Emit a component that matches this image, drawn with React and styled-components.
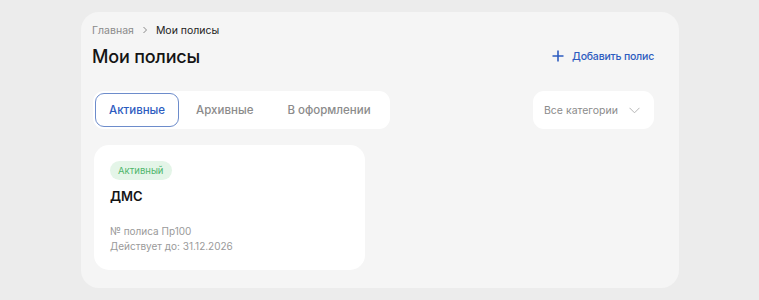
import styled, { createGlobalStyle } from "styled-components"

const Global = createGlobalStyle`
  html, body { margin: 0; padding: 0; background: #ececec; }
  body { font-family: Inter, "Noto Sans", sans-serif; }
`

const Screen = styled.div`
  width: 759px;
  height: 300px;
  box-sizing: border-box;
  padding: 12px 80px 12px 81px;
  display: flex;
`

const Panel = styled.div`
  flex: 1;
  background: #f5f5f5;
  border-radius: 18px;
  padding: 11px 25px 0 11px;
  display: flex;
  flex-direction: column;
`

const Crumbs = styled.div`
  display: flex;
  align-items: center;
  gap: 7px;
  font-size: 10.5px;
  height: 14px;
  color: #222;
`

const CrumbLink = styled.span`
  color: #8a8a8a;
`

const HeadRow = styled.div`
  display: flex;
  justify-content: space-between;
  align-items: center;
  margin-top: 7px;
  height: 24px;
`

const Title = styled.h1`
  margin: 0;
  font-size: 18px;
  font-weight: 500;
  color: #141414;
  letter-spacing: -0.2px;
`

const AddBtn = styled.button`
  border: none;
  background: none;
  padding: 0;
  display: flex;
  align-items: center;
  gap: 8px;
  color: #2d5cc0;
  font: 500 10.5px Inter, "Noto Sans", sans-serif;
  letter-spacing: -0.2px;
`

const Controls = styled.div`
  display: flex;
  justify-content: space-between;
  margin-top: 23px;
`

const Tabs = styled.div`
  display: flex;
  align-items: center;
  background: #fff;
  border-radius: 11px;
  padding: 2px;
  height: 38px;
  box-sizing: border-box;
  margin-left: 1px;
`

const Tab = styled.div`
  height: 34px;
  box-sizing: border-box;
  display: flex;
  align-items: center;
  padding: 0 ${p => (p.$active ? "13px" : "16px")};
  border-radius: 9px;
  border: 1px solid ${p => (p.$active ? "#6d8ccb" : "transparent")};
  color: ${p => (p.$active ? "#2d5cc0" : "#8b8b8b")};
  font-size: 11.5px;
  font-weight: 500;
`

const Select = styled.div`
  width: 121px;
  height: 38px;
  box-sizing: border-box;
  background: #fff;
  border-radius: 11px;
  display: flex;
  align-items: center;
  justify-content: space-between;
  padding: 0 14px 0 11px;
  font-size: 10.5px;
  color: #8b8b8b;
`

const Card = styled.div`
  width: 271px;
  height: 125px;
  box-sizing: border-box;
  margin-top: 16px;
  margin-left: 2px;
  background: #fff;
  border-radius: 15px;
  padding: 16px 16px;
  display: flex;
  flex-direction: column;
  align-items: flex-start;
`

const Badge = styled.span`
  background: #e4f5e8;
  color: #4fb56b;
  font-size: 9.5px;
  font-weight: 400;
  border-radius: 10px;
  padding: 4px 8px;
  line-height: 11px;
`

const CardTitle = styled.div`
  margin-top: 8px;
  font-size: 13px;
  font-weight: 600;
  color: #141414;
`

const Meta = styled.div`
  margin-top: ${p => p.$gap || 0}px;
  font-size: 10px;
  color: #9a9a9a;
  line-height: 15px;
`

export default function App() {
  return (
    <Screen>
      <Global />
      <Panel>
        <Crumbs>
          <CrumbLink>Главная</CrumbLink>
          <svg width="8" height="8" viewBox="0 0 8 8" fill="none">
            <path d="M2.5 1l3 3-3 3" stroke="#8a8a8a" strokeWidth="1" />
          </svg>
          <span>Мои полисы</span>
        </Crumbs>
        <HeadRow>
          <Title>Мои полисы</Title>
          <AddBtn>
            <svg width="12" height="12" viewBox="0 0 12 12" fill="none">
              <path d="M6 0.5v11M0.5 6h11" stroke="#2d5cc0" strokeWidth="1.6" />
            </svg>
            Добавить полис
          </AddBtn>
        </HeadRow>
        <Controls>
          <Tabs>
            <Tab $active>Активные</Tab>
            <Tab>Архивные</Tab>
            <Tab>В оформлении</Tab>
          </Tabs>
          <Select>
            Все категории
            <svg width="11" height="7" viewBox="0 0 11 7" fill="none">
              <path d="M0.5 0.8l5 5 5-5" stroke="#b5b5b5" strokeWidth="1" />
            </svg>
          </Select>
        </Controls>
        <Card>
          <Badge>Активный</Badge>
          <CardTitle>ДМС</CardTitle>
          <Meta $gap={20}>№ полиса Пр100</Meta>
          <Meta>Действует до: 31.12.2026</Meta>
        </Card>
      </Panel>
    </Screen>
  )
}
